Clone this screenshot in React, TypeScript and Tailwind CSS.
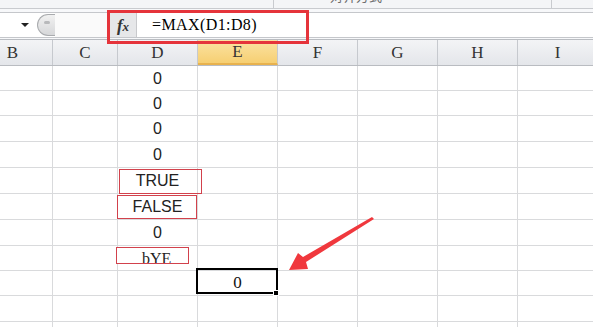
import React from "react";

const serif = "[font-family:'Liberation_Serif','Noto_Sans_CJK_SC',serif]";

const colWidths = [80, 65, 80, 80, 80, 80, 80, 80];
const colNames = ["B", "C", "D", "E", "F", "G", "H", "I"];
const rowHeights = [25, 25, 26, 26, 26, 26, 26, 25, 25, 26, 26];
const dValues: Record<number, string> = {
  0: "0",
  1: "0",
  2: "0",
  3: "0",
  4: "TRUE",
  5: "FALSE",
  6: "0",
};

export default function App() {
  return (
    <div className="relative w-[593px] h-[327px] overflow-hidden bg-white">
      {/* ribbon bottom strip */}
      <div className="h-[9px] bg-[#f4f5f7] border-b border-[#c9cbcf] flex overflow-hidden">
        <div className="w-[274px] shrink-0 border-r border-[#c9cbcf]" />
        <div className="w-[278px] shrink-0 border-r border-[#c9cbcf] overflow-hidden">
          <div className="pl-[56px] mt-[-11px] text-[13px] leading-[14px] text-[#6b6b6b] [font-family:'Noto_Sans_CJK_SC',sans-serif]">
            对齐方式
          </div>
        </div>
        <div className="flex-1" />
      </div>

      {/* formula bar */}
      <div className="h-[30px] bg-[#f7f8fa] pt-[3px]">
        <div className="h-[26px] flex border-y border-[#c5c7cb] bg-white">
          <div className="w-[37px] shrink-0 bg-white flex items-center justify-end pr-[8px]">
            <div className="w-0 h-0 border-l-[4px] border-r-[4px] border-t-[4px] border-l-transparent border-r-transparent border-t-[#222]" />
          </div>
          <div className="w-[18px] shrink-0 my-[1px] rounded-l-full bg-gradient-to-b from-[#f1f1f1] to-[#d6d7d9] border border-r-0 border-[#a9abae] flex items-start justify-center pt-[6px]">
            <div className="w-[6px] h-[3px] rounded-full bg-[#b8b9bb]" />
          </div>
          <div className="w-[55px] shrink-0 bg-[#fafafa]" />
          <div className="w-[27px] shrink-0 bg-[#e6e7e9] border-r border-[#c8c9cc] flex items-center justify-center">
            <span className={`${serif} italic font-bold text-[17px] text-[#333] leading-none`}>
              f<span className="text-[13px]">x</span>
            </span>
          </div>
          <div className={`flex-1 flex items-center pl-[15px] ${serif} text-[16px] tracking-[0.4px] text-black`}>
            =MAX(D1:D8)
          </div>
        </div>
      </div>

      {/* grid */}
      <div className="ml-[-27px]">
        <div className="flex h-[27px] bg-gradient-to-b from-[#f3f4f6] to-[#e4e6ea] border-y border-[#b9bcc1]">
          {colNames.map((n, i) => (
            <div
              key={n}
              style={{ width: colWidths[i] }}
              className={`shrink-0 border-r border-[#c6c9ce] flex items-center justify-center ${serif} text-[17px] text-[#333] ${
                n === "E" ? "bg-gradient-to-b from-[#fbe3a2] to-[#f6cf72] border-b-2 border-b-[#e8b24e]" : ""
              }`}
            >
              {n}
            </div>
          ))}
        </div>
        {rowHeights.map((h, r) => (
          <div key={r} className="flex" style={{ height: h }}>
            {colNames.map((n, i) => (
              <div
                key={n}
                style={{ width: colWidths[i] }}
                className="shrink-0 border-r border-b border-[#d9dadc] flex items-center justify-center"
              >
                {n === "D" && dValues[r] !== undefined && (
                  <span className="[font-family:'Liberation_Sans',sans-serif] text-[16px] text-[#222] pt-[1px]">
                    {dValues[r]}
                  </span>
                )}
                {n === "E" && r === 8 && (
                  <span className={`${serif} text-[17px] text-[#111]`}>0</span>
                )}
              </div>
            ))}
          </div>
        ))}
      </div>

      {/* annotations */}
      <div className="absolute left-[107px] top-[10px] w-[202px] h-[34px] border-[3px] border-[#e5343b]" />
      <div className="absolute left-[119px] top-[169px] w-[83px] h-[25px] border border-[#d2414c]" />
      <div className="absolute left-[117px] top-[195px] w-[80px] h-[24px] border border-[#d2414c]" />
      <div className="absolute left-[116px] top-[247px] w-[73px] h-[17px] border border-[#d2414c] bg-white overflow-hidden">
        <div className={`${serif} text-[16px] leading-none text-[#222] pl-[25px] pt-[3px]`}>bYE</div>
      </div>

      {/* active cell */}
      <div className="absolute left-[196px] top-[268px] w-[82px] h-[26px] border-2 border-black" />
      <div className="absolute left-[273px] top-[290px] w-[6px] h-[6px] bg-black border border-white" />

      {/* arrow */}
      <svg className="absolute left-0 top-0" width="593" height="327" viewBox="0 0 593 327">
        <polygon
          points="289,270 298,253 303,257 372,217 374,219 306,262 308,269"
          fill="#f0383d"
        />
      </svg>
    </div>
  );
}
